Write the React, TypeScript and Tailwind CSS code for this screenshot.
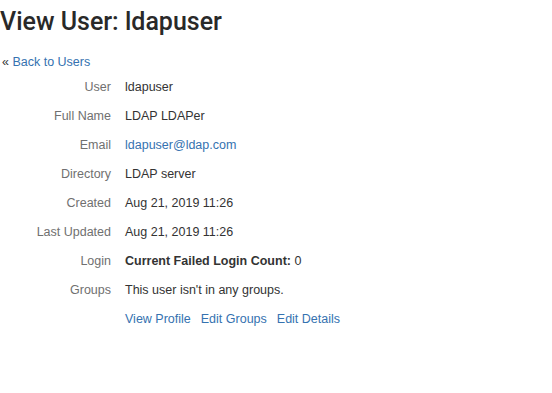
const rows: { label: string; value: React.ReactNode }[] = [
  { label: "User", value: "ldapuser" },
  { label: "Full Name", value: "LDAP LDAPer" },
  { label: "Email", value: <a className="text-[#3572b0]">ldapuser@ldap.com</a> },
  { label: "Directory", value: "LDAP server" },
  { label: "Created", value: "Aug 21, 2019 11:26" },
  { label: "Last Updated", value: "Aug 21, 2019 11:26" },
  {
    label: "Login",
    value: (
      <>
        <strong className="font-bold">Current Failed Login Count:</strong> 0
      </>
    ),
  },
  { label: "Groups", value: "This user isn't in any groups." },
];

export default function App() {
  return (
    <div className="w-[552px] h-[393px] bg-white text-[#333333] font-['Liberation_Sans',Arial,sans-serif] text-[12.5px]">
      <h1 className="pt-[7px] font-['Roboto',sans-serif] font-medium text-[25px] leading-[30px] text-[#292929]">
        View User: ldapuser
      </h1>

      <div className="mt-[17px] leading-[16px] pl-[2px]">
        <span className="text-[#333]">«</span>{" "}
        <a className="text-[#3572b0]">Back to Users</a>
      </div>

      <div className="mt-[3px] flex flex-col">
        {rows.map((r) => (
          <div key={r.label} className="flex h-[29px] items-center">
            <div className="w-[112px] pr-[1px] text-right text-[#707070]">{r.label}</div>
            <div className="pl-[13px]">{r.value}</div>
          </div>
        ))}
        <div className="flex h-[29px] items-center">
          <div className="w-[112px]" />
          <div className="pl-[13px] flex gap-[10px] text-[#3572b0]">
            <a>View Profile</a>
            <a>Edit Groups</a>
            <a>Edit Details</a>
          </div>
        </div>
      </div>
    </div>
  );
}
